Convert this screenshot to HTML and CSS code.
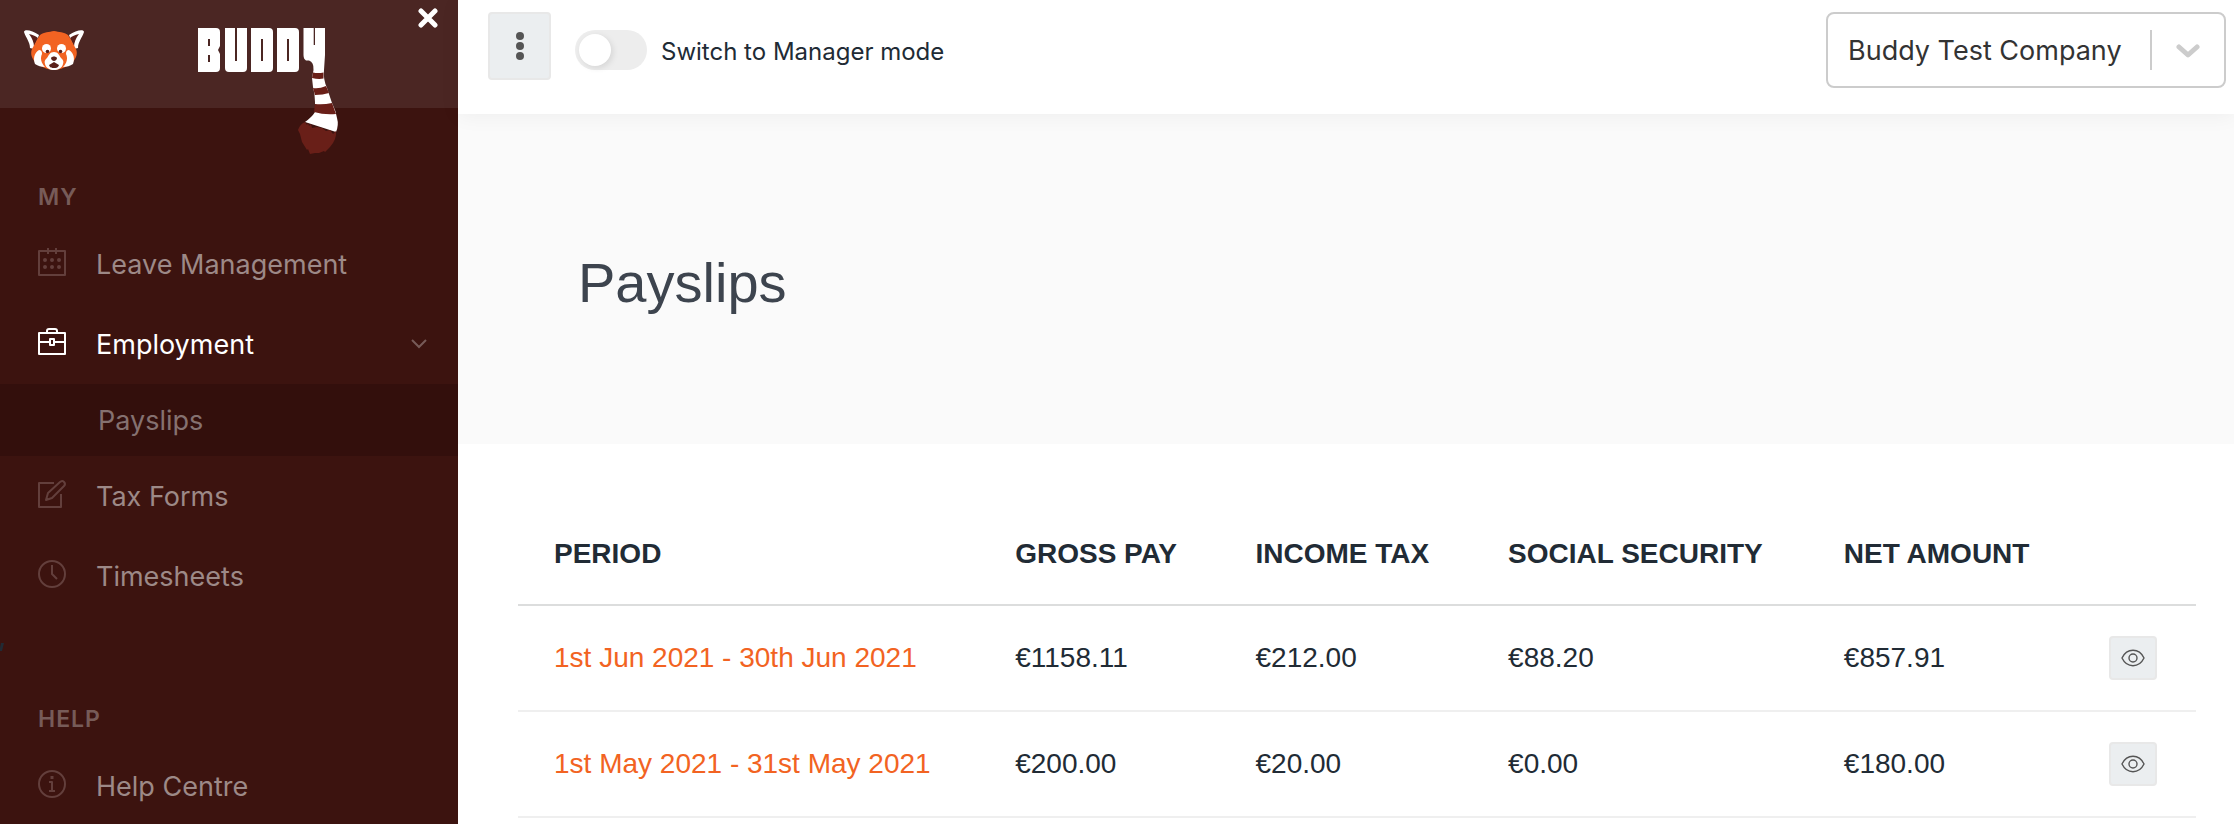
FILE: index.html
```html
<!DOCTYPE html>
<html lang="en">
<head>
    <meta charset="utf-8">
    <meta name="viewport" content="width=device-width, initial-scale=1">
    <title>Payslips</title>
    <link rel="stylesheet" href="styles.css">
</head>
<body>
    <!-- shared icons -->
    <svg class="sprite" xmlns="http://www.w3.org/2000/svg">
        <symbol id="eye" viewBox="0 0 24 18">
            <path d="M1 9C3.400 4 7.300 1.300 12 1.300S20.600 4 23 9c-2.400 5-6.300 7.700-11 7.700S3.400 14 1 9z" fill="none" stroke="currentColor" stroke-width="1.400"/>
            <circle cx="12" cy="9" r="4" fill="none" stroke="currentColor" stroke-width="1.400"/>
        </symbol>
    </svg>

    <aside class="sidebar">
        <header class="sidebar-header">
            <a href="#" class="panda" aria-label="Home">
                <svg viewBox="0 0 60 42" width="60" height="42">
                    <path d="M0 2C0-1 8 0 15 5l-5 14-4-1C6 12 2 8 0 2zM60 2c0-3-8-2-15 3l5 14 4-1c0-6 4-10 6-16z" fill="#fff"/>
                    <path d="M5 4c4 1 7 2 9 4l-4 9C10 12 8 8 5 4zM55 4c-4 1-7 2-9 4l4 9c0-5 2-9 5-13z" fill="#5b201a"/>
                    <path d="M30 1c5 1 10 1 14 4 3 4 5 9 8 14 2 5 0 9-3 13-5 4-12 8-19 8s-14-4-19-8c-3-4-5-8-3-13 3-5 5-10 8-14 4-3 9-3 14-4z" fill="#f26322"/>
                    <path d="M15 20c-5 3-6 9-4 14 3 2 6 3 10 3-4-4-5-9-3-13 0-3-1-4-3-4zM45 20c5 3 6 9 4 14-3 2-6 3-10 3 4-4 5-9 3-13 0-3 1-4 3-4z" fill="#fff"/>
                    <circle cx="22.500" cy="18.500" r="4.500" fill="#fff"/>
                    <circle cx="37.500" cy="18.500" r="4.500" fill="#fff"/>
                    <path d="M30 22c4 0 5 3 7 6 2 2 3 3 2 6-1 4-5 6-9 6s-8-2-9-6c-1-3 0-4 2-6 2-3 3-6 7-6z" fill="#fff"/>
                    <circle cx="23.500" cy="21.500" r="1.800" fill="#5b201a"/>
                    <circle cx="36.500" cy="21.500" r="1.800" fill="#5b201a"/>
                    <path d="M27 28c1-2 5-2 6 0 0 2-2 3-3 3s-3-1-3-3zM30 32l5 3c-1 3-3 3-5 3s-4 0-5-3z" fill="#5b201a"/>
                </svg>
            </a>
            <span class="brand">
                <svg viewBox="0 0 142 128" width="142" height="128" role="img" aria-label="Buddy">
                    <g fill="#fff" fill-rule="evenodd">
                        <path d="M0 0h18q4 0 4 4v14l-2 4 2 4v14q0 4-4 4H0zM10 11v7h2v-7zM10 27v7h2v-7z"/>
                        <path d="M27 0h10v33h2V0h10v40q0 4-4 4H31q-4 0-4-4z"/>
                        <path d="M53 0h18q4 0 4 4v36q0 4-4 4H53zM63 11v22h2V11z"/>
                        <path d="M79 0h18q4 0 4 4v36q0 4-4 4H79zM89 11v22h2V11z"/>
                        <path d="M105.500 0H115.700V17H117V0H127V27L126 42Q125 51 129 60L134 75Q138 83 139 90Q141 97 138 104L107 94Q114 89 117 84V74Q117 66 115 59L114 50L115.500 42Q116 34 111 32.500H108Q105.500 31 105.500 27Z"/>
                    </g>
                    <g fill="#691f18">
                        <path d="M115 44.500q5 1 10.500 0v6q-5 1-11.500-.5zM115 60q6 1 13-2l3 7q-6 2-14 2zM117 76q8 1 17-1l4 11q-12 1-22-2z"/>
                        <path d="M107 94l2 3 1-2 1 3 2-2 1 4 5-1 5 1 4 3 4-1 3 4 3-3q1 8-6 16l-5 5-1-1-5 2-4 0-5 1-2-5-1 1-5-8-2-8-2-4q2-6 7-8z"/>
                    </g>
                </svg>
            </span>
            <button class="close" type="button" aria-label="Close menu">
                <svg viewBox="0 0 20 20" width="20" height="20"><path d="M3 3l14 14M17 3L3 17" stroke="#fff" stroke-width="5" stroke-linecap="round"/></svg>
            </button>
        </header>

        <nav class="menu">
            <h3>MY</h3>
            <ul>
                <li><a href="#">
                    <svg class="icon" viewBox="0 0 28 28"><path d="M1 3h26v24H1zM10 0v6M18 0v6"/><path d="M7 12h0M14 12h0M21 12h0M7 19h0M14 19h0M21 19h0" stroke-width="4" stroke-linecap="round"/></svg>
                    <span>Leave Management</span>
                </a></li>
                <li class="active"><a href="#">
                    <svg class="icon" viewBox="0 0 28 28"><path d="M1 5h26v21H1zM9 5V3q0-2 2-2h6q2 0 2 2v2M1 14h11M16 14h11M12 11h4v6h-4z"/></svg>
                    <span>Employment</span>
                    <svg class="arrow" viewBox="0 0 16 10" width="16" height="10"><path d="M1 1l7 7 7-7"/></svg>
                </a>
                    <ul class="submenu">
                        <li><a href="#">Payslips</a></li>
                    </ul>
                </li>
                <li><a href="#">
                    <svg class="icon" viewBox="0 0 28 28"><path d="M16 3H1v24h22V14M8 20l2-7L22 2q3-2 4 0 2 2 0 4L14 18z"/></svg>
                    <span>Tax Forms</span>
                </a></li>
                <li><a href="#">
                    <svg class="icon" viewBox="0 0 28 28"><circle cx="14" cy="14" r="13"/><path d="M14 5v9l5 5"/></svg>
                    <span>Timesheets</span>
                </a></li>
            </ul>
            <svg class="tick" viewBox="0 0 4 8" width="4" height="8"><path d="M1 0h3L2 8H0V5z" fill="#212b35"/></svg>
            <h3 class="help">HELP</h3>
            <ul>
                <li><a href="#">
                    <svg class="icon" viewBox="0 0 28 28"><circle cx="14" cy="14" r="13"/><path d="M11 12h3v9M11 21h6"/><path d="M14 6v3" stroke-width="3"/></svg>
                    <span>Help Centre</span>
                </a></li>
            </ul>
        </nav>
    </aside>

    <main>
        <header class="topbar">
            <button class="more" type="button" aria-label="More">
                <svg viewBox="0 0 8 28" width="8" height="28" fill="#555"><circle cx="4" cy="4" r="4"/><circle cx="4" cy="14" r="4"/><circle cx="4" cy="24" r="4"/></svg>
            </button>
            <label class="switch">
                <input type="checkbox">
                <span>Switch to Manager mode</span>
            </label>
            <div class="company">
                <select aria-label="Company">
                    <option>Buddy Test Company</option>
                </select>
                <svg viewBox="0 0 24 14" width="24" height="14"><path d="M3 3l9 8 9-8" fill="none" stroke="#ccc" stroke-width="5" stroke-linecap="round" stroke-linejoin="round"/></svg>
            </div>
        </header>

        <section class="hero">
            <h1>Payslips</h1>
        </section>

        <section class="content">
            <table>
                <thead>
                    <tr>
                        <th>PERIOD</th>
                        <th>GROSS PAY</th>
                        <th>INCOME TAX</th>
                        <th>SOCIAL SECURITY</th>
                        <th>NET AMOUNT</th>
                        <th></th>
                    </tr>
                </thead>
                <tbody>
                    <tr>
                        <td><a href="#">1st Jun 2021 - 30th Jun 2021</a></td>
                        <td>€1158.11</td>
                        <td>€212.00</td>
                        <td>€88.20</td>
                        <td>€857.91</td>
                        <td><button class="view" type="button" aria-label="View payslip"><svg width="24" height="18"><use href="#eye"/></svg></button></td>
                    </tr>
                    <tr>
                        <td><a href="#">1st May 2021 - 31st May 2021</a></td>
                        <td>€200.00</td>
                        <td>€20.00</td>
                        <td>€0.00</td>
                        <td>€180.00</td>
                        <td><button class="view" type="button" aria-label="View payslip"><svg width="24" height="18"><use href="#eye"/></svg></button></td>
                    </tr>
                </tbody>
            </table>
        </section>
    </main>
</body>
</html>
```
FILE: styles.css
```css
* { margin: 0; padding: 0; box-sizing: border-box; }

body {
    display: flex;
    min-height: 100vh;
    font-family: Inter, sans-serif;
    font-size: 27px;
    color: #212b35;
    background: #fff;
}

a { text-decoration: none; }
ul { list-style: none; }
button { cursor: pointer; }
svg { display: block; }
.sprite { display: none; }

/* sidebar */
.sidebar {
    flex: none;
    width: 458px;
    background: #3c130f;
}

.sidebar-header {
    display: flex;
    align-items: flex-start;
    height: 108px;
    padding: 0 20px 0 24px;
    background: #4b2623;
}

.panda { padding-top: 30px; }
.brand { padding: 28px 0 0 114px; }
.close { margin-left: auto; padding-top: 8px; background: none; border: 0; }

.menu h3 {
    padding: 74px 38px 12px;
    font-size: 23px;
    font-weight: 600;
    line-height: 30px;
    letter-spacing: 1px;
    color: #775b58;
}
.menu h3.help { padding-top: 53px; }

.menu a {
    display: flex;
    align-items: center;
    gap: 30px;
    height: 80px;
    padding: 0 31px 0 38px;
    color: #9d8987;
}

.icon {
    width: 28px;
    height: 28px;
    margin-bottom: 4px;
    fill: none;
    stroke: #633f3c;
    stroke-width: 2;
    stroke-linejoin: round;
}

.arrow {
    margin-left: auto;
    fill: none;
    stroke: #775b58;
    stroke-width: 2;
}

.tick { margin-top: 27px; }

.menu .active > a { color: #fff; }
.active .icon { stroke: #fff; }

.submenu { background: #330f0c; }
.menu .submenu a {
    height: 72px;
    padding-left: 98px;
    color: #857170;
}

/* top bar */
main { flex: 1; min-width: 0; }

.topbar {
    position: relative;
    display: flex;
    align-items: flex-start;
    height: 114px;
    padding: 12px 8px 0 30px;
    background: #fff;
    box-shadow: 0 2px 20px rgba(0, 0, 0, 0.05);
}

.more {
    display: grid;
    place-items: center;
    width: 63px;
    height: 68px;
    background: #ebeef0;
    border: 2px solid #e8e8e8;
    border-radius: 4px;
}

.switch {
    display: flex;
    align-items: center;
    gap: 14px;
    padding: 18px 0 0 24px;
    font-size: 24px;
    cursor: pointer;
}
.switch span { padding-top: 2px; }

.switch input {
    appearance: none;
    width: 72px;
    height: 40px;
    padding: 4px;
    background: #ededed;
    border-radius: 20px;
}
.switch input::before {
    content: "";
    display: block;
    width: 32px;
    height: 32px;
    background: #fff;
    border-radius: 50%;
    box-shadow: 2px 2px 6px rgba(0, 0, 0, 0.1);
}
.switch input:checked::before { margin-left: auto; }

.company {
    position: relative;
    margin-left: auto;
    width: 400px;
}
.company select {
    appearance: none;
    width: 100%;
    height: 76px;
    padding: 0 80px 0 20px;
    font: inherit;
    color: #333;
    background: #fff;
    border: 2px solid #ccc;
    border-radius: 8px;
}
/* divider and chevron sit over the select */
.company::after {
    content: "";
    position: absolute;
    top: 18px;
    right: 74px;
    width: 2px;
    height: 40px;
    background: #ccc;
}
.company svg {
    position: absolute;
    top: 32px;
    right: 26px;
    pointer-events: none;
}

/* page title */
.hero {
    display: flex;
    align-items: center;
    height: 330px;
    padding: 6px 120px 0;
    background: #fafafa;
}
.hero h1 {
    font-family: "Liberation Sans", sans-serif;
    font-size: 56px;
    font-weight: 400;
    color: #3d444e;
}

/* payslips */
.content { padding: 60px 38px 0 60px; }

table {
    width: 100%;
    border-spacing: 0;
    font-family: "Liberation Sans", sans-serif;
    font-size: 28px;
}
th, td {
    height: 106px;
    padding: 0 36px;
    text-align: left;
    white-space: nowrap;
    border-bottom: 2px solid #efefef;
}
th { height: 102px; border-color: #dcdddd; }
td a { color: #f26322; }

.view {
    display: grid;
    place-items: center;
    width: 48px;
    height: 44px;
    color: #555;
    background: #ebeef0;
    border: 2px solid #e8e8e8;
    border-radius: 4px;
}
```
